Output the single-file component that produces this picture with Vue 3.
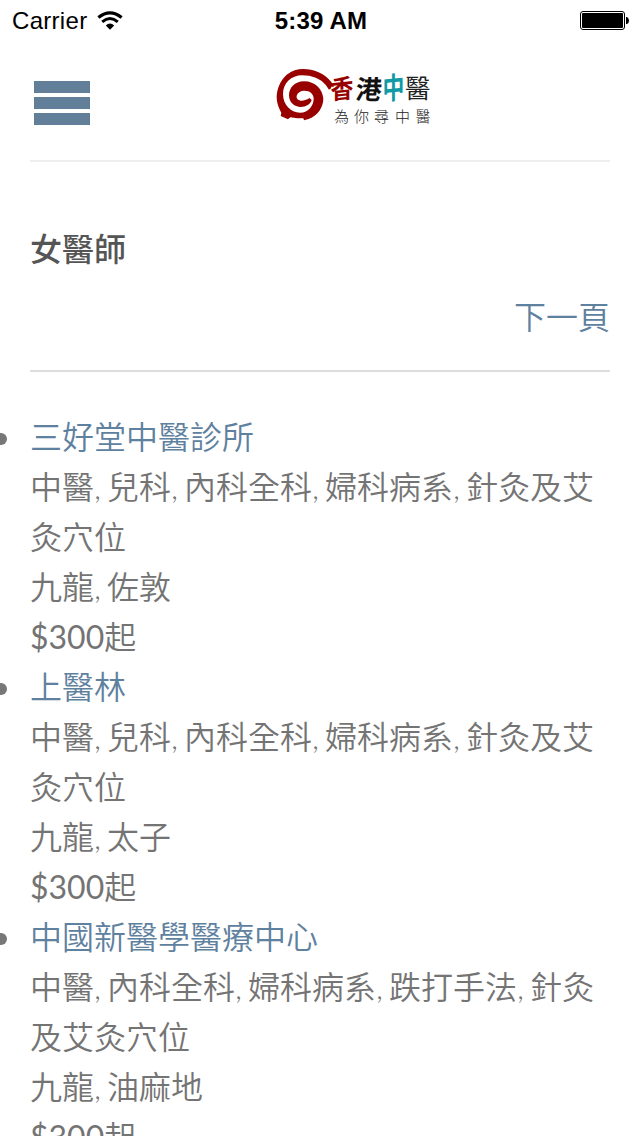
<template>
  <div class="screen">
    <div class="status-bar">
      <div class="carrier">
        <span class="carrier-name">Carrier</span>
        <svg class="wifi" width="26" height="20" viewBox="0 0 26 20">
          <path d="M1.4 6.6 Q13 -2.8 24.6 6.6" fill="none" stroke="#000" stroke-width="3.2" />
          <path d="M5.2 10.8 Q13 4.2 20.8 10.8" fill="none" stroke="#000" stroke-width="3" />
          <path d="M8.8 14.4 Q13 10.6 17.2 14.4 L13 18.8 Z" fill="#000" />
        </svg>
      </div>
      <span class="time">5:39 AM</span>
      <div class="battery">
        <svg width="50" height="20" viewBox="0 0 50 20">
          <rect x="0.5" y="0.5" width="44" height="18" rx="2.5" fill="#fff" stroke="#000" />
          <rect x="2" y="2" width="41" height="15" rx="1" fill="#000" />
          <path d="M46 6 h1 q2 1 2 3.5 t-2 3.5 h-1 z" fill="#000" />
        </svg>
      </div>
    </div>

    <header class="header">
      <button class="menu-btn" aria-label="menu">
        <span class="bar"></span>
        <span class="bar"></span>
        <span class="bar"></span>
      </button>
      <svg class="logo" width="170" height="60" viewBox="274 67 170 60">
        <!-- brushed swirl -->
        <path
          transform="translate(274 64) scale(0.3333)"
          fill="#980000"
          d="M180 68 L172 54 C152 28 118 15 88 15 C70 15 55 20 38 32 C18 50 8 78 8 100 C8 116 14 132 22 147 L20 156 L42 166 L49 160 L70 163 L88 163 L90 169 L104 165 C132 155 148 128 148 104 C146 76 124 52 90 52 C62 52 45 72 45 94 C45 116 62 129 80 129 C96 129 110 120 113 108 L107 102 C96 109 86 111 80 110 C70 108 67 102 68 96 C70 86 80 80 92 80 C108 80 119 90 119 104 C119 124 104 146 78 146 C50 146 27 122 27 90 C27 58 52 34 84 34 C114 34 140 44 156 64 L165 77 L171 73 L172 68 Z"
        />
        <g class="logo-name">
          <text fill="#980000" transform="translate(330.500 99.500) skewY(-6) scale(0.88 1)">香</text>
          <text fill="#111" transform="translate(355 98.500) skewX(-5)">港</text>
          <text fill="#109aa5" transform="translate(382.500 100) skewY(-6) scale(0.84 1.15)">中</text>
          <text class="thin" fill="#222" transform="translate(405 97.500) scale(0.98 1)">醫</text>
        </g>
        <text class="tagline" x="334 354 374 395 415.500" y="122">為你尋中醫</text>
      </svg>
    </header>

    <main class="content">
      <h1 class="title">女醫師</h1>
      <div class="pager">
        <a class="link">下一頁</a>
      </div>
      <ul class="clinics">
        <li v-for="clinic in clinics" :key="clinic.name" class="clinic">
          <a class="link">{{ clinic.name }}</a>
          <div>{{ clinic.services }}</div>
          <div>{{ clinic.area }}</div>
          <div><span class="amount">{{ clinic.price }}</span>起</div>
        </li>
      </ul>
    </main>
  </div>
</template>

<script setup>
const clinics = [
  {
    name: '三好堂中醫診所',
    services: '中醫, 兒科, 內科全科, 婦科病系, 針灸及艾灸穴位',
    area: '九龍, 佐敦',
    price: '$300'
  },
  {
    name: '上醫林',
    services: '中醫, 兒科, 內科全科, 婦科病系, 針灸及艾灸穴位',
    area: '九龍, 太子',
    price: '$300'
  },
  {
    name: '中國新醫學醫療中心',
    services: '中醫, 內科全科, 婦科病系, 跌打手法, 針灸及艾灸穴位',
    area: '九龍, 油麻地',
    price: '$300'
  }
];
</script>

<style>
body {
  margin: 0;
  background: #fff;
}
</style>

<style scoped>
.screen {
  height: 1136px;
  overflow: hidden;
  background: #fff;
  color: #747474;
  font-family: Lato, 'Noto Sans CJK TC', sans-serif;
  font-size: 32px;
  font-weight: 350;
  line-height: 50px;
}

.status-bar {
  display: grid;
  grid-template-columns: 1fr auto 1fr;
  align-items: center;
  height: 40px;
  padding: 0 10px 0 12px;
  color: #000;
  font-family: 'Liberation Sans', Arial, sans-serif;
  font-size: 24px;
  font-weight: 400;
  line-height: 40px;
}

.carrier {
  display: flex;
  align-items: center;
  gap: 10px;
}

.carrier-name {
  letter-spacing: 0.3px;
}

.wifi {
  margin-top: -1px;
}

.carrier-name,
.time {
  line-height: 42px;
}

.time {
  font-weight: bold;
  letter-spacing: 0.2px;
}

.battery {
  display: flex;
  justify-content: flex-end;
}

.header {
  display: flex;
  align-items: flex-start;
  box-sizing: border-box;
  height: 122px;
  margin: 0 30px;
  padding: 27px 0 0 4px;
  border-bottom: 2px solid #eee;
}

.menu-btn {
  display: flex;
  flex-direction: column;
  gap: 4px;
  margin: 14px 184px 0 0;
  padding: 0;
  border: none;
  background: none;
}

.bar {
  width: 56px;
  height: 12px;
  background: #627f9a;
}

.logo-name {
  font-family: 'Noto Sans CJK TC', sans-serif;
  font-size: 26px;
  font-weight: bold;
}

.logo-name .thin {
  font-weight: 400;
}

.tagline {
  fill: #222;
  font-family: 'Noto Sans CJK TC', sans-serif;
  font-size: 15px;
  font-weight: 300;
}

.content {
  padding: 62px 30px 0;
}

.title {
  margin: 0;
  color: #555;
  font-size: 32px;
  font-weight: 500;
}

.pager {
  height: 78px;
  padding-top: 18px;
  border-bottom: 2px solid #ddd;
  text-align: right;
}

.link {
  color: #5f81a0;
}

.clinics {
  margin: 40px 0 0;
  padding: 0;
  list-style: none;
}

.clinic {
  position: relative;
  word-spacing: -2.7px;
}

.clinic::before {
  content: '';
  position: absolute;
  top: 21px;
  left: -35px;
  width: 12px;
  height: 12px;
  border-radius: 50%;
  background: #777;
}

.amount {
  font-weight: 400;
}
</style>
